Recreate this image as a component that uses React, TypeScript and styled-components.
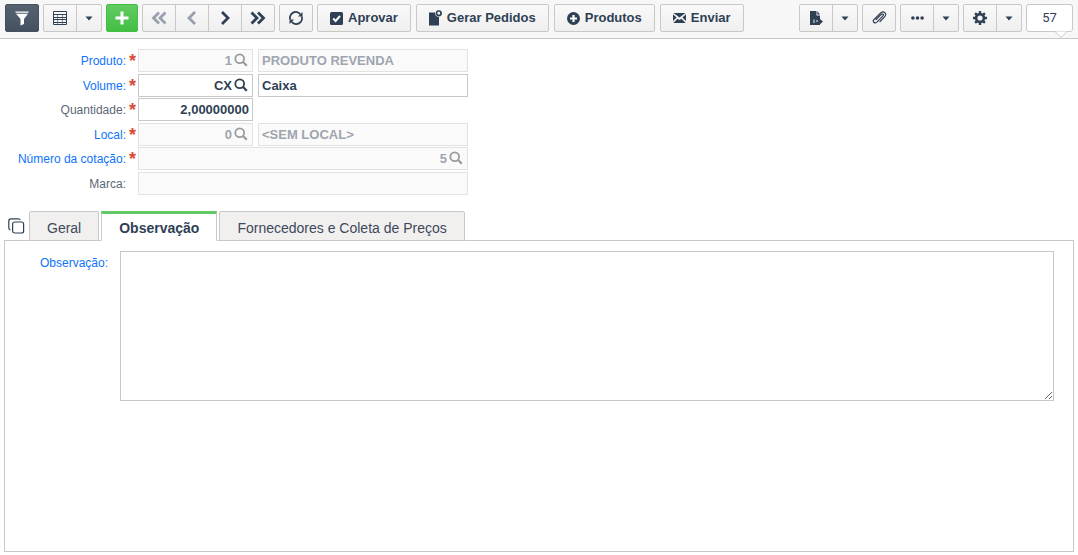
import React from "react";
import styled, { createGlobalStyle, css } from "styled-components";

const ink = "#2f3f54";
const line = "#c8c8c8";

const GlobalStyle = createGlobalStyle`
  *, *::before, *::after { box-sizing: border-box; }
  body {
    margin: 0;
    background: #fff;
    color: ${ink};
    font-family: "Liberation Sans", Arial, sans-serif;
    font-size: 12px;
  }
  button, input, textarea { font: inherit; color: inherit; }
`;

const Page = styled.div`
  min-height: 100vh;
  display: flex;
  flex-direction: column;
`;

const Toolbar = styled.header`
  display: flex;
  justify-content: space-between;
  padding: 4px 5px 6px;
  background: #f7f7f7;
  border-bottom: 1px solid ${line};
`;

const ToolSet = styled.div<{ $gap?: number }>`
  display: flex;
  gap: ${(p) => p.$gap ?? 4}px;
`;

const ToolButton = styled.button<{ $width?: number; $tone?: "dark" | "green" }>`
  display: inline-flex;
  align-items: center;
  justify-content: center;
  gap: 5px;
  height: 28px;
  width: ${(p) => (p.$width ? `${p.$width}px` : "auto")};
  padding: ${(p) => (p.$width ? "0" : "0 12px")};
  border: 1px solid ${line};
  border-radius: 2px;
  background: linear-gradient(#f9f9f9, #efefef);
  color: ${ink};
  font-size: 13px;
  font-weight: 700;
  line-height: 16px;
  white-space: nowrap;
  cursor: pointer;

  ${(p) =>
    p.$tone === "dark" &&
    css`
      color: #fff;
      border-color: #465160;
      background: linear-gradient(#566172, #465160);
    `}
  ${(p) =>
    p.$tone === "green" &&
    css`
      color: #fff;
      border-color: #43bd43;
      background: linear-gradient(#62cb62, #43bf43);
    `}
  &:disabled {
    color: #97a0ac;
    cursor: default;
  }
  svg { flex: none; }
`;

const ButtonGroup = styled.div`
  display: flex;

  ${ToolButton} + ${ToolButton} { margin-left: -1px; }
  ${ToolButton}:not(:first-child) {
    border-top-left-radius: 0;
    border-bottom-left-radius: 0;
  }
  ${ToolButton}:not(:last-child) {
    border-top-right-radius: 0;
    border-bottom-right-radius: 0;
  }
`;

const Counter = styled.output`
  position: relative;
  width: 47px;
  height: 28px;
  border: 1px solid ${line};
  border-radius: 3px;
  background: #fff;
  font-family: Roboto, sans-serif;
  font-size: 13px;
  line-height: 26px;
  text-align: center;

  svg {
    position: absolute;
    right: 5px;
    top: 26px;
  }
`;

const Form = styled.form`
  padding: 10px 4px 0;
`;

const Row = styled.div`
  display: flex;
  align-items: center;
  & + & { margin-top: 1px; }
  &:nth-child(even) { margin-top: 2px; }
`;

const Label = styled.label<{ $link?: boolean }>`
  width: 122px;
  font-size: 12px;
  line-height: 16px;
  text-align: right;
  color: ${(p) => (p.$link ? "#1073fa" : "#5c6675")};
`;

const Required = styled.span`
  width: 12px;
  padding-left: 3px;
  color: #d94a38;
  font-size: 18px;
  font-weight: 700;
  line-height: 18px;
  height: 18px;
`;

const FieldBox = styled.div<{ $wide?: boolean; $off?: boolean }>`
  display: flex;
  align-items: center;
  width: ${(p) => (p.$wide ? 330 : 115)}px;
  height: 23px;
  padding: 0 3px;
  border: 1px solid ${(p) => (p.$off ? "#e2e2e2" : line)};
  background: ${(p) => (p.$off ? "#fafafa" : "#fff")};
  color: ${(p) => (p.$off ? "#9ea5af" : ink)};
`;

const Description = styled(FieldBox)`
  width: 210px;
  margin-left: 5px;
`;

const Input = styled.input<{ $right?: boolean }>`
  flex: 1;
  min-width: 0;
  height: 21px;
  padding: 0;
  border: 0;
  outline: 0;
  background: transparent;
  font-size: 13px;
  font-weight: 700;
  text-align: ${(p) => (p.$right ? "right" : "left")};
`;

const LookupButton = styled.button`
  display: flex;
  width: 17px;
  padding: 0 1px 2px 2px;
  border: 0;
  background: none;
  cursor: pointer;
  &:disabled { color: #9b9b9b; }
`;

const Tabs = styled.div`
  display: flex;
  align-items: flex-end;
  gap: 2px;
  margin: 16px 4px -1px;
`;

const CopyButton = styled.button`
  width: 23px;
  height: 30px;
  padding: 0 0 0 4px;
  border: 0;
  background: none;
  cursor: pointer;
  svg { display: block; }
`;

const Tab = styled.button<{ $active?: boolean }>`
  position: relative;
  height: 30px;
  padding: 4px 17px 0;
  border: 1px solid ${line};
  border-radius: 2px 2px 0 0;
  background: #f1f0ef;
  color: #3d495a;
  font-size: 14px;
  line-height: 16px;
  cursor: pointer;

  ${(p) =>
    p.$active &&
    css`
      padding-top: 2px;
      border-top: 3px solid #63c966;
      border-bottom-color: #fff;
      border-radius: 0;
      background: #fff;
      color: ${ink};
      font-weight: 700;
    `}
`;

const Panel = styled.section`
  flex: 1;
  display: flex;
  align-items: flex-start;
  margin: 0 4px 3px;
  padding: 10px 19px 10px 0;
  border: 1px solid ${line};
`;

const NoteLabel = styled(Label)`
  width: 103px;
  margin: 4px 12px 0 0;
`;

const Note = styled.textarea`
  flex: 1;
  min-width: 0;
  height: 150px;
  border: 1px solid ${line};
  border-radius: 0;
  outline: 0;
  resize: both;
`;

const Caret = () => (
  <svg width="8" height="5" viewBox="0 0 8 5" fill="currentColor"><path d="M0.500 0.500h7L4 4.500z" /></svg>
);
const Funnel = () => (
  <svg width="14" height="15" viewBox="0 0 14 15" fill="currentColor">
    <path d="M0.500 0.500h13v1.300h-13zM1 2.800h12L9 8v5L5.500 14.500V8z" />
  </svg>
);
const GridIcon = () => (
  <svg width="14" height="14" viewBox="0 0 14 14" fill="currentColor">
    <path fillRule="evenodd" d="M1 0h12a1 1 0 0 1 1 1v12a1 1 0 0 1-1 1H1a1 1 0 0 1-1-1V1a1 1 0 0 1 1-1zM1 1v2h12V1zM1 4v2h12V4zM1 7v1h12V7zM1 9v2h12V9zM1 12v1h12v-1z" />
    <path d="M4 4h1v9H4zM9 4h1v9H9z" opacity="0.5" />
  </svg>
);
const Plus = () => (
  <svg width="14" height="14" viewBox="0 0 14 14" fill="currentColor"><path d="M5.500 0.500h3v5h5v3h-5v5h-3v-5h-5v-3h5z" /></svg>
);
const Chevron = ({ dir, twice }: { dir: "left" | "right"; twice?: boolean }) => (
  <svg width={twice ? 16 : 10} height="14" viewBox={twice ? "0 0 16 14" : "0 0 10 14"} fill="none" stroke="currentColor" strokeWidth="2.800">
    <g transform={dir === "left" ? `translate(${twice ? 16 : 10} 0) scale(-1 1)` : undefined}>
      <path d={twice ? "M1.500 1.500L7 7l-5.500 5.500M8 1.500L13.500 7l-5.500 5.500" : "M2 1l6 6-6 6"} />
    </g>
  </svg>
);
const Refresh = () => (
  <svg width="14" height="14" viewBox="0 0 14 14">
    <path d="M1.300 8.500A5.700 5.700 0 0 1 11.300 3.300M12.700 5.500A5.700 5.700 0 0 1 2.700 10.700" fill="none" stroke="currentColor" strokeWidth="1.800" />
    <path d="M13.500 1v4.500H9zM0.500 13V8.500H5z" fill="currentColor" />
  </svg>
);
const Check = () => (
  <svg width="13" height="13" viewBox="0 0 13 13">
    <rect width="13" height="13" rx="1.500" fill="currentColor" />
    <path d="M3.200 6.500l2.400 2.500 4.400-5" stroke="#fff" strokeWidth="1.900" fill="none" />
  </svg>
);
const DocDot = () => (
  <svg width="13" height="16" viewBox="0 0 13 16" fill="currentColor">
    <path d="M0 2.500h6a4 4 0 0 0 4 4.500V15.500H0z" />
    <circle cx="9.800" cy="3.300" r="2.300" fill="none" stroke="currentColor" strokeWidth="1.700" />
  </svg>
);
const CirclePlus = () => (
  <svg width="13" height="13" viewBox="0 0 13 13">
    <circle cx="6.500" cy="6.500" r="6.500" fill="currentColor" />
    <path d="M6.500 3v7M3 6.500h7" stroke="#fff" strokeWidth="2.200" />
  </svg>
);
const Envelope = () => (
  <svg width="13" height="10" viewBox="0 0 13 10" fill="currentColor">
    <path d="M0.500 0h12L6.500 4.600zM0 1.200l3.600 3.400L0 8zM13 1.200V8L9.400 4.600zM0.300 10l4.300-4.300 1.900 1.300 1.900-1.300 4.300 4.300z" />
  </svg>
);
const Export = () => (
  <svg width="14" height="14" viewBox="0 0 14 14" fill="currentColor">
    <path d="M1 0h6.500v4.500H11V8l3 2.500-3 2.800V14H1z" />
    <path d="M8.300 0L11 3.500H8.300z" />
    <path d="M4.500 8.500v3.500h1V8.500zM7 9.500h2v1H7z" fill="#f4f4f4" />
  </svg>
);
const Clip = () => (
  <svg width="15" height="14" viewBox="0 0 15 14" fill="none" stroke="currentColor" strokeWidth="1.200" strokeLinecap="round">
    <path d="M4 8.500l5-5c1.600-1.500 3.200.2 1.800 1.700l-6 5.900c-2.300 2-4.800-.6-2.700-2.800l6.500-6.400c3.200-2.800 6.800.6 4 3.900L8 10.500" />
  </svg>
);
const Dots = () => (
  <svg width="13" height="4" viewBox="0 0 13 4" fill="currentColor">
    <circle cx="1.900" cy="2" r="1.800" /><circle cx="6.500" cy="2" r="1.800" /><circle cx="11.100" cy="2" r="1.800" />
  </svg>
);
const Gear = () => (
  <svg width="14" height="14" viewBox="0 0 14 14" fill="none" stroke="currentColor">
    <circle cx="7" cy="7" r="3.900" strokeWidth="2.600" />
    <path d="M7 0v3M7 11v3M0 7h3M11 7h3M2.100 2.100l2.200 2.200M9.700 9.700l2.200 2.200M2.100 11.900l2.200-2.200M9.700 4.300l2.200-2.200" strokeWidth="2.400" />
  </svg>
);
const Lens = () => (
  <svg width="14" height="14" viewBox="0 0 14 14" fill="none" stroke="currentColor">
    <circle cx="5.700" cy="5.700" r="4.400" strokeWidth="1.800" />
    <path d="M8.800 8.800l4 4" strokeWidth="2.200" />
  </svg>
);
const Copy = () => (
  <svg width="17" height="16" viewBox="0 0 17 16" fill="none" stroke="currentColor" strokeWidth="1.200">
    <rect x="4.600" y="4" width="11" height="11" rx="2" />
    <path d="M2.600 12A2 2 0 0 1 0.800 10V3A2.200 2.200 0 0 1 3 0.800h7A2 2 0 0 1 12.200 2.200" />
  </svg>
);

interface FieldProps {
  id: string;
  label: string;
  value?: string;
  description?: string;
  link?: boolean;
  required?: boolean;
  lookup?: boolean;
  wide?: boolean;
  off?: boolean;
}

const Field = ({ id, label, value = "", description, link, required, lookup, wide, off }: FieldProps) => (
  <Row>
    <Label htmlFor={id} $link={link}>{label}:</Label>
    <Required>{required && "*"}</Required>
    <FieldBox $wide={wide} $off={off}>
      <Input id={id} $right defaultValue={value} readOnly={off} />
      {lookup && (
        <LookupButton type="button" disabled={off} aria-label={`Pesquisar ${label}`}><Lens /></LookupButton>
      )}
    </FieldBox>
    {description && (
      <Description $off={off}>
        <Input aria-label={`Descrição ${label}`} defaultValue={description} readOnly={off} />
      </Description>
    )}
  </Row>
);

export default function App() {
  return (
    <Page>
      <GlobalStyle />
      <Toolbar>
        <ToolSet $gap={5}>
          <ToolSet>
            <ToolButton $width={34} $tone="dark" aria-label="Filtrar"><Funnel /></ToolButton>
            <ButtonGroup>
              <ToolButton $width={34} aria-label="Grade"><GridIcon /></ToolButton>
              <ToolButton $width={26} aria-label="Opções da grade"><Caret /></ToolButton>
            </ButtonGroup>
            <ToolButton $width={32} $tone="green" aria-label="Adicionar"><Plus /></ToolButton>
            <ButtonGroup>
              <ToolButton $width={34} disabled aria-label="Primeiro"><Chevron dir="left" twice /></ToolButton>
              <ToolButton $width={34} disabled aria-label="Anterior"><Chevron dir="left" /></ToolButton>
              <ToolButton $width={34} aria-label="Próximo"><Chevron dir="right" /></ToolButton>
              <ToolButton $width={34} aria-label="Último"><Chevron dir="right" twice /></ToolButton>
            </ButtonGroup>
            <ToolButton $width={34} aria-label="Atualizar"><Refresh /></ToolButton>
            <ToolButton><Check />Aprovar</ToolButton>
          </ToolSet>
          <ToolButton><DocDot />Gerar Pedidos</ToolButton>
          <ToolButton><CirclePlus />Produtos</ToolButton>
          <ToolButton><Envelope />Enviar</ToolButton>
        </ToolSet>
        <ToolSet>
          <ButtonGroup>
            <ToolButton $width={34} aria-label="Exportar"><Export /></ToolButton>
            <ToolButton $width={26} aria-label="Opções de exportação"><Caret /></ToolButton>
          </ButtonGroup>
          <ToolButton $width={34} aria-label="Anexos"><Clip /></ToolButton>
          <ButtonGroup>
            <ToolButton $width={34} aria-label="Mais"><Dots /></ToolButton>
            <ToolButton $width={26} aria-label="Mais opções"><Caret /></ToolButton>
          </ButtonGroup>
          <ButtonGroup>
            <ToolButton $width={34} aria-label="Configurações"><Gear /></ToolButton>
            <ToolButton $width={26} aria-label="Opções de configuração"><Caret /></ToolButton>
          </ButtonGroup>
          <Counter>
            57
            <svg width="12" height="8" viewBox="0 0 12 8" fill="#fff" stroke={line}><path d="M0 0.500L6 6.500l6-6" /></svg>
          </Counter>
        </ToolSet>
      </Toolbar>

      <Form onSubmit={(e) => e.preventDefault()}>
        <Field id="produto" label="Produto" value="1" description="PRODUTO REVENDA" link required lookup off />
        <Field id="volume" label="Volume" value="CX" description="Caixa" link required lookup />
        <Field id="quantidade" label="Quantidade" value="2,00000000" required />
        <Field id="local" label="Local" value="0" description="<SEM LOCAL>" link required lookup off />
        <Field id="cotacao" label="Número da cotação" value="5" link required lookup wide off />
        <Field id="marca" label="Marca" wide off />
      </Form>

      <Tabs role="tablist">
        <CopyButton aria-label="Copiar"><Copy /></CopyButton>
        <Tab role="tab">Geral</Tab>
        <Tab role="tab" aria-selected $active>Observação</Tab>
        <Tab role="tab">Fornecedores e Coleta de Preços</Tab>
      </Tabs>
      <Panel role="tabpanel">
        <NoteLabel htmlFor="observacao" $link>Observação:</NoteLabel>
        <Note id="observacao" />
      </Panel>
    </Page>
  );
}
